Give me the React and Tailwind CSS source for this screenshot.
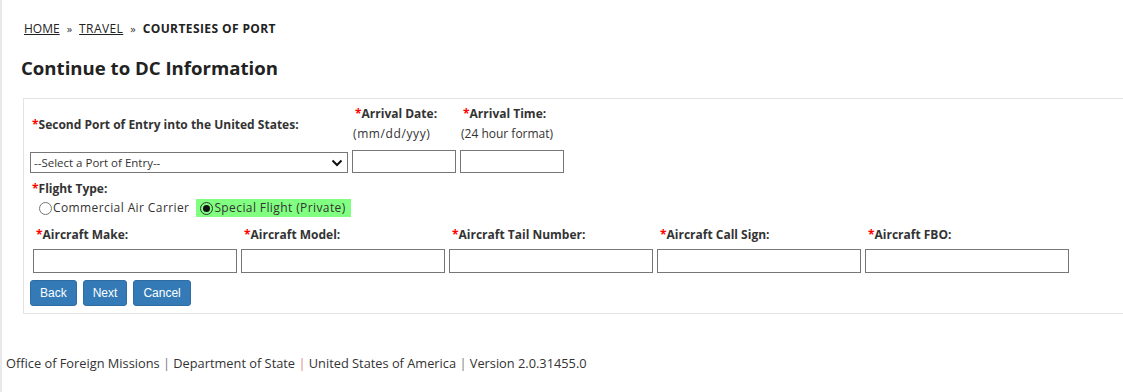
export default function App() {
  const Req = () => <span className="text-[#ff0000]">*</span>;
  const aircraft = ["Aircraft Make:", "Aircraft Model:", "Aircraft Tail Number:", "Aircraft Call Sign:", "Aircraft FBO:"];
  return (
    <div className="w-[1123px] h-[392px] bg-white text-[#333] border-l-2 border-[#e8e8e8] overflow-hidden" style={{ fontFamily: '"Open Sans", sans-serif' }}>
      <div className="pl-[22px] pt-[21px] text-[12px] leading-[16px] flex items-center">
        <a className="underline text-[#222]">HOME</a>
        <span className="mx-[7px] text-[11px]">»</span>
        <a className="underline text-[#222] tracking-[0.4px]">TRAVEL</a>
        <span className="mx-[7px] text-[11px]">»</span>
        <span className="font-bold text-[#222] tracking-[0.4px]">COURTESIES OF PORT</span>
      </div>
      <h1 className="pl-[19px] mt-[18px] text-[18.6px] leading-[26px] font-bold text-[#222]">Continue to DC Information</h1>
      <div className="ml-[21px] mt-[17px] border border-r-0 border-[#e3e3e3] h-[216px] pl-[6px] pt-[7px]">
        <div className="flex items-end">
          <div className="flex flex-col">
            <div className="pl-[2px] text-[12px] font-bold leading-[16px] h-[33px] flex items-center pb-[3px]"><Req />Second Port of Entry into the United States:</div>
            <div className="mt-[9px] w-[318px] h-[21px] border border-[#767676] flex items-center justify-between pl-[3px] pr-[4px] text-[11.5px]">
              <span>--Select a Port of Entry--</span>
              <svg width="12" height="8" viewBox="0 0 12 8"><path d="M1.5 1.5 L6 6 L10.5 1.5" fill="none" stroke="#111" strokeWidth="2" /></svg>
            </div>
          </div>
          <div className="flex flex-col ml-[4px]">
            <div className="pl-[3px] text-[12px] font-bold leading-[16px]"><Req />Arrival Date:</div>
            <div className="pl-[1px] mt-[4px] text-[12px] leading-[16px] tracking-[0.6px]">(mm/dd/yyy)</div>
            <div className="mt-[8px] w-[104px] h-[23px] border border-[#767676]"></div>
          </div>
          <div className="flex flex-col ml-[4px]">
            <div className="pl-[3px] text-[12px] font-bold leading-[16px]"><Req />Arrival Time:</div>
            <div className="pl-[1px] mt-[4px] text-[12px] leading-[16px]">(24 hour format)</div>
            <div className="mt-[8px] w-[104px] h-[23px] border border-[#767676]"></div>
          </div>
        </div>
        <div className="mt-[8px] pl-[2px] text-[12px] font-bold leading-[16px]"><Req />Flight Type:</div>
        <div className="flex items-center mt-[2px] pl-[9px] text-[12px] leading-[18px]">
          <span className="w-[13px] h-[13px] rounded-full border border-[#767676] mr-[1px]"></span>
          <span className="tracking-[0.4px]">Commercial Air Carrier</span>
          <span className="ml-[7px] bg-[#80ff80] flex items-center pl-[4px] pr-[5px] h-[18px]">
            <span className="w-[13px] h-[13px] rounded-full border border-[#333] flex items-center justify-center mr-[1px]"><span className="w-[7px] h-[7px] rounded-full bg-[#111]"></span></span>
            <span className="tracking-[0.4px]">Special Flight (Private)</span>
          </span>
        </div>
        <div className="flex gap-[4px] mt-[10px] pl-[3px]">
          {aircraft.map((a) => (
            <div key={a} className="flex flex-col">
              <div className="pl-[3px] text-[12px] font-bold leading-[16px]"><Req />{a}</div>
              <div className="mt-[6px] w-[204px] h-[24px] border border-[#767676]"></div>
            </div>
          ))}
        </div>
        <div className="flex gap-[6px] mt-[7px]" style={{ fontFamily: '"Liberation Sans", sans-serif' }}>
          {["Back", "Next", "Cancel"].map((b) => (
            <button key={b} className="h-[26px] px-[9px] rounded-[3px] bg-[#337ab7] border border-[#2e6da4] text-white text-[12px]">{b}</button>
          ))}
        </div>
      </div>
      <div className="pl-[4px] mt-[41px] text-[12.8px] leading-[16px] text-[#333]">
        Office of Foreign Missions <span className="text-[#777]">|</span> Department of State <span className="text-[#e08080]">|</span> United States of America <span className="text-[#777]">|</span> Version 2.0.31455.0
      </div>
    </div>
  );
}
